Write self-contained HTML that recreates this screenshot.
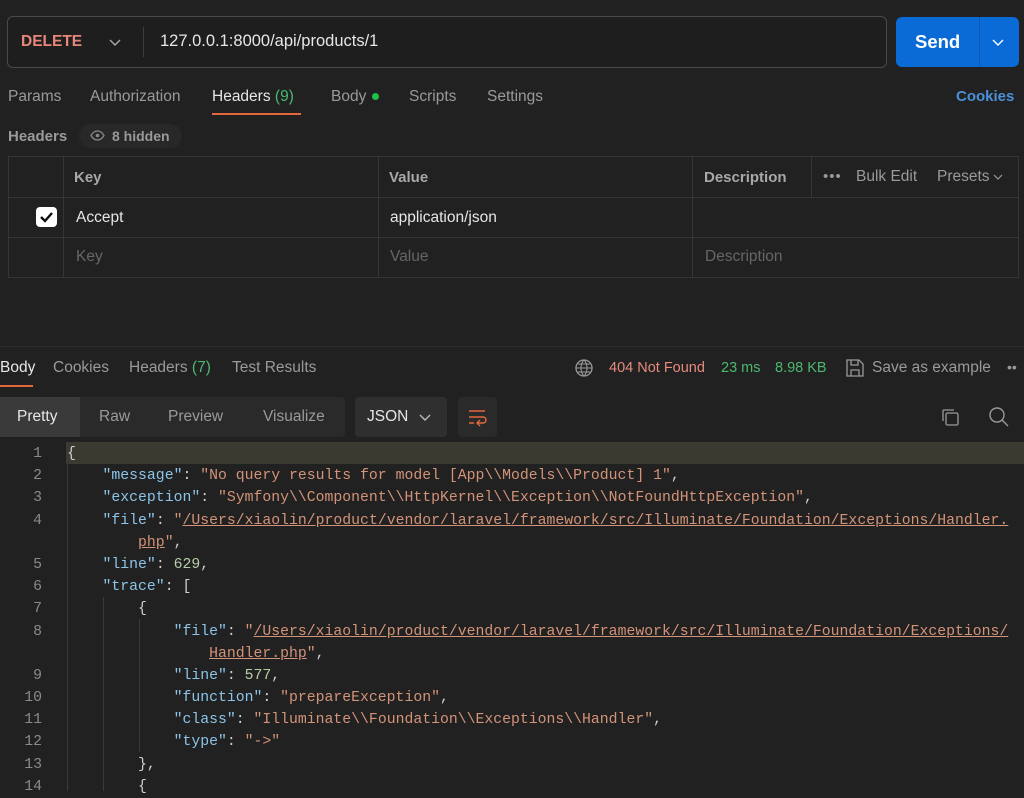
<!DOCTYPE html>
<html><head><meta charset="utf-8"><style>
*{margin:0;padding:0;box-sizing:border-box}
body{width:1024px;height:791px;background:#212121;font-family:"Liberation Sans",sans-serif;color:#d0d0d0;position:relative;overflow:hidden}
.a{position:absolute;white-space:nowrap}
.t{font-size:15.5px;color:#9a9a9a}
.code{position:absolute;left:0;top:443px;width:1024px;font-family:"Liberation Mono",monospace;font-size:14.8px}
.row{height:22.2px;line-height:22.2px;position:relative;white-space:pre;color:#cfcfcf}
.ln{position:absolute;left:0;width:42px;text-align:right;color:#8a8a8a}
.tx{position:absolute;left:67px}
.k{color:#8cc4e8}.s{color:#d39379}.n{color:#b5cea8}.u{text-decoration:underline;text-decoration-color:#d39379}
.g{position:absolute;width:1px;background:#3a3a3a}
</style></head><body>
<!-- URL bar -->
<div class="a" style="left:7px;top:16px;width:880px;height:52px;border:1px solid #4a4a4a;border-radius:6px;background:#1e1e1e"></div>
<div class="a" style="left:21px;top:33px;font-size:15.5px;font-weight:bold;color:#e7877a">DELETE</div>
<svg class="a" style="left:109px;top:37px" width="12" height="10"><path d="M1 3l5 5 5-5" stroke="#aaa" stroke-width="1.4" fill="none"/></svg>
<div class="a" style="left:143px;top:27px;width:1px;height:30px;background:#3e3e3e"></div>
<div class="a" style="left:160px;top:32px;font-size:16.5px;color:#e6e6e6">127.0.0.1:8000/api/products/1</div>
<div class="a" style="left:896px;top:17px;width:123px;height:50px;background:#0b6bd6;border-radius:6px"></div>
<div class="a" style="left:979px;top:17px;width:1px;height:50px;background:#0a5ab5"></div>
<div class="a" style="left:915px;top:31px;font-size:18.5px;font-weight:bold;color:#fff">Send</div>
<svg class="a" style="left:992px;top:37px" width="12" height="10"><path d="M1 3l5 5 5-5" stroke="#fff" stroke-width="1.4" fill="none"/></svg>
<!-- tabs -->
<div class="a t" style="left:8px;top:88px">Params</div>
<div class="a t" style="left:90px;top:88px">Authorization</div>
<div class="a" style="left:212px;top:88px;font-size:15.5px;color:#e6e6e6">Headers <span style="color:#4cb870">(9)</span></div>
<div class="a" style="left:212px;top:113px;width:89px;height:2px;background:#e3683c"></div>
<div class="a t" style="left:331px;top:88px">Body</div>
<div class="a" style="left:372px;top:93px;width:7px;height:7px;border-radius:50%;background:#1fbf4a"></div>
<div class="a t" style="left:409px;top:88px">Scripts</div>
<div class="a t" style="left:487px;top:88px">Settings</div>
<div class="a" style="left:956px;top:88px;font-size:15px;font-weight:bold;color:#4a90d9">Cookies</div>
<div class="a" style="left:8px;top:128px;font-size:15px;font-weight:bold;color:#9a9a9a">Headers</div>
<div class="a" style="left:79px;top:124px;width:103px;height:24px;border-radius:12px;background:#282828"></div>
<svg class="a" style="left:90px;top:130px" width="15" height="11"><path d="M1 5.5C3 2 5 1 7.5 1S12 2 14 5.5C12 9 10 10 7.5 10S3 9 1 5.5z" stroke="#888" stroke-width="1.3" fill="none"/><circle cx="7.5" cy="5.5" r="1.8" fill="#888"/></svg>
<div class="a" style="left:112px;top:128px;font-size:14px;font-weight:bold;color:#999">8 hidden</div>
<!-- table -->
<div class="a" style="left:8px;top:156px;width:1011px;height:122px;border:1px solid #353535"></div>
<div class="a" style="left:8px;top:197px;width:1011px;height:1px;background:#353535"></div>
<div class="a" style="left:8px;top:237px;width:1011px;height:1px;background:#353535"></div>
<div class="a" style="left:63px;top:156px;width:1px;height:122px;background:#353535"></div>
<div class="a" style="left:378px;top:156px;width:1px;height:122px;background:#353535"></div>
<div class="a" style="left:692px;top:156px;width:1px;height:122px;background:#353535"></div>
<div class="a" style="left:811px;top:156px;width:1px;height:41px;background:#353535"></div>
<div class="a" style="left:74px;top:169px;font-size:15px;font-weight:bold;color:#a8a8a8">Key</div>
<div class="a" style="left:389px;top:169px;font-size:15px;font-weight:bold;color:#a8a8a8">Value</div>
<div class="a" style="left:704px;top:169px;font-size:15px;font-weight:bold;color:#a8a8a8">Description</div>
<div class="a" style="left:823px;top:168px;font-size:15px;color:#999;letter-spacing:1px">•••</div>
<div class="a t" style="left:856px;top:168px">Bulk Edit</div>
<div class="a t" style="left:937px;top:168px">Presets</div>
<svg class="a" style="left:993px;top:173px" width="10" height="8"><path d="M1 2l4 4 4-4" stroke="#999" stroke-width="1.2" fill="none"/></svg>
<div class="a" style="left:36px;top:207px;width:21px;height:20px;background:#fff;border-radius:4px"></div>
<svg class="a" style="left:39px;top:210px" width="15" height="14"><path d="M2 7l4 4 7-8" stroke="#111" stroke-width="2.4" fill="none"/></svg>
<div class="a" style="left:76px;top:209px;font-size:15.5px;color:#e6e6e6">Accept</div>
<div class="a" style="left:390px;top:209px;font-size:15.5px;color:#e6e6e6">application/json</div>
<div class="a" style="left:76px;top:248px;font-size:15.5px;color:#666">Key</div>
<div class="a" style="left:390px;top:248px;font-size:15.5px;color:#666">Value</div>
<div class="a" style="left:705px;top:248px;font-size:15.5px;color:#666">Description</div>
<!-- response -->
<div class="a" style="left:0;top:346px;width:1024px;height:1px;background:#2c2c2c"></div>
<div class="a" style="left:0;top:359px;font-size:15.5px;color:#e6e6e6">Body</div>
<div class="a" style="left:0;top:385px;width:33px;height:2px;background:#e3683c"></div>
<div class="a t" style="left:53px;top:359px">Cookies</div>
<div class="a t" style="left:129px;top:359px">Headers <span style="color:#4cb870">(7)</span></div>
<div class="a t" style="left:232px;top:359px">Test Results</div>
<svg class="a" style="left:574px;top:358px" width="20" height="20"><circle cx="10" cy="10" r="8" stroke="#999" stroke-width="1.3" fill="none"/><path d="M2 10h16M10 2c-4 4-4 12 0 16M10 2c4 4 4 12 0 16M4 6h12M4 14h12" stroke="#999" stroke-width="1.1" fill="none"/></svg>
<div class="a" style="left:609px;top:360px;font-size:14.5px;color:#e58a7e">404 Not Found</div>
<div class="a" style="left:721px;top:360px;font-size:14.5px;color:#4cb870">23 ms</div>
<div class="a" style="left:775px;top:360px;font-size:14.5px;color:#4cb870">8.98 KB</div>
<svg class="a" style="left:845px;top:358px" width="20" height="20"><path d="M2 2h12l4 4v12H2z M6 2v5h7V2 M6 18v-6h8v6" stroke="#999" stroke-width="1.3" fill="none"/></svg>
<div class="a t" style="left:872px;top:359px">Save as example</div>
<div class="a" style="left:1007px;top:359px;font-size:14px;color:#999">••</div>
<!-- toolbar -->
<div class="a" style="left:0;top:397px;width:345px;height:40px;background:#2a2a2a;border-radius:4px"></div>
<div class="a" style="left:0;top:397px;width:80px;height:40px;background:#3a3a3a"></div>
<div class="a" style="left:17px;top:408px;font-size:15.5px;color:#e6e6e6">Pretty</div>
<div class="a t" style="left:99px;top:408px">Raw</div>
<div class="a t" style="left:168px;top:408px">Preview</div>
<div class="a t" style="left:263px;top:408px">Visualize</div>
<div class="a" style="left:355px;top:397px;width:92px;height:40px;background:#2f2f2f;border-radius:4px"></div>
<div class="a" style="left:367px;top:408px;font-size:15.5px;color:#e6e6e6">JSON</div>
<svg class="a" style="left:419px;top:412px" width="12" height="10"><path d="M1 3l5 5 5-5" stroke="#bbb" stroke-width="1.4" fill="none"/></svg>
<div class="a" style="left:458px;top:397px;width:39px;height:40px;background:#2a2a2a;border-radius:4px"></div>
<svg class="a" style="left:467px;top:407px" width="20" height="20"><path d="M2 4h16M2 10h14a3 3 0 0 1 0 6h-5M13 13l-3 3 3 3M2 16h5" stroke="#e3683c" stroke-width="1.4" fill="none"/></svg>
<svg class="a" style="left:940px;top:407px" width="20" height="20"><rect x="6" y="6" width="12" height="12" rx="1.5" stroke="#999" stroke-width="1.3" fill="none"/><path d="M3 14V4a1 1 0 0 1 1-1h10" stroke="#999" stroke-width="1.3" fill="none"/></svg>
<svg class="a" style="left:988px;top:406px" width="22" height="22"><circle cx="9" cy="9" r="7" stroke="#999" stroke-width="1.4" fill="none"/><path d="M14 14l6 6" stroke="#999" stroke-width="1.4"/></svg>
<!-- code -->
<div class="a" style="left:66px;top:442px;width:958px;height:22px;background:#3a3a30"></div>
<div class="g" style="left:67px;top:464px;height:327px"></div>
<div class="g" style="left:103px;top:597px;height:194px"></div>
<div class="g" style="left:139px;top:619px;height:133px"></div>
<div class="code">
<div class="row"><span class="ln">1</span><span class="tx">{</span></div>
<div class="row"><span class="ln">2</span><span class="tx">    <span class="k">"message"</span>: <span class="s">"No query results for model [App\\Models\\Product] 1"</span>,</span></div>
<div class="row"><span class="ln">3</span><span class="tx">    <span class="k">"exception"</span>: <span class="s">"Symfony\\Component\\HttpKernel\\Exception\\NotFoundHttpException"</span>,</span></div>
<div class="row"><span class="ln">4</span><span class="tx">    <span class="k">"file"</span>: <span class="s">"<span class="u">/Users/xiaolin/product/vendor/laravel/framework/src/Illuminate/Foundation/Exceptions/Handler.</span></span></span></div>
<div class="row"><span class="tx">        <span class="s"><span class="u">php</span>"</span>,</span></div>
<div class="row"><span class="ln">5</span><span class="tx">    <span class="k">"line"</span>: <span class="n">629</span>,</span></div>
<div class="row"><span class="ln">6</span><span class="tx">    <span class="k">"trace"</span>: [</span></div>
<div class="row"><span class="ln">7</span><span class="tx">        {</span></div>
<div class="row"><span class="ln">8</span><span class="tx">            <span class="k">"file"</span>: <span class="s">"<span class="u">/Users/xiaolin/product/vendor/laravel/framework/src/Illuminate/Foundation/Exceptions/</span></span></span></div>
<div class="row"><span class="tx">                <span class="s"><span class="u">Handler.php</span>"</span>,</span></div>
<div class="row"><span class="ln">9</span><span class="tx">            <span class="k">"line"</span>: <span class="n">577</span>,</span></div>
<div class="row"><span class="ln">10</span><span class="tx">            <span class="k">"function"</span>: <span class="s">"prepareException"</span>,</span></div>
<div class="row"><span class="ln">11</span><span class="tx">            <span class="k">"class"</span>: <span class="s">"Illuminate\\Foundation\\Exceptions\\Handler"</span>,</span></div>
<div class="row"><span class="ln">12</span><span class="tx">            <span class="k">"type"</span>: <span class="s">"-&gt;"</span></span></div>
<div class="row"><span class="ln">13</span><span class="tx">        },</span></div>
<div class="row"><span class="ln">14</span><span class="tx">        {</span></div>
</div>
</body></html>
